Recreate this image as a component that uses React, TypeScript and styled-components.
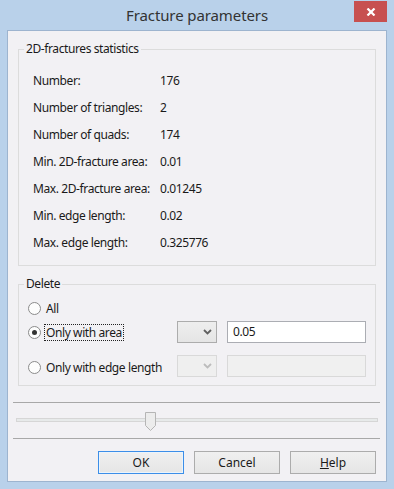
import React from "react";
import styled, { createGlobalStyle, css } from "styled-components";

const GlobalStyle = createGlobalStyle`
  html, body {
    margin: 0;
    padding: 0;
    background: #b9d1ea;
  }
  * {
    box-sizing: border-box;
  }
`;

const Window = styled.div`
  width: 394px;
  height: 489px;
  background: #b9d1ea;
  display: flex;
  flex-direction: column;
  font-family: "Noto Sans", "Open Sans", sans-serif;
  font-size: 12px;
  letter-spacing: -0.4px;
  color: #1a1a1a;
`;

const TitleBar = styled.div`
  height: 30px;
  display: grid;
  grid-template-columns: 1fr auto 1fr;
  align-items: start;
`;

const Title = styled.div`
  grid-column: 2;
  font-size: 15px;
  line-height: 31px;
  color: #333;
  letter-spacing: -0.1px;
`;

const CloseButton = styled.div`
  grid-column: 3;
  justify-self: end;
  margin: 1px 7px 0 0;
  width: 33px;
  height: 21px;
  background: #c75050;
  display: flex;
  align-items: center;
  justify-content: center;
`;

const Client = styled.div`
  margin: 0 7px 7px 7px;
  border: 1px solid #9db4cf;
  background: #f2f1f4;
  padding: 10px 10px 7px 10px;
  display: flex;
  flex-direction: column;
`;

const Group = styled.fieldset<{ $top: number; $bottom: number }>`
  margin: 0;
  border: 1px solid #dcdcdc;
  padding: ${({ $top, $bottom }) => `${$top}px 0 ${$bottom}px 0`};
  min-width: 0;

  & + & {
    margin-top: 10px;
  }
`;

const Legend = styled.legend`
  padding: 0 2px;
  margin-left: 5px;
  line-height: 16px;
  font-size: 12px;
`;

const StatsGrid = styled.div`
  display: grid;
  grid-template-columns: 127px 1fr;
  grid-auto-rows: 27px;
  align-items: center;
  padding: 0 14px;
`;

const DeleteGrid = styled.div`
  display: grid;
  grid-template-columns: 139px 40px 1fr;
  grid-template-rows: 18px 22px 30px;
  row-gap: 4px;
  column-gap: 10px;
  align-items: center;
  padding: 0 9px;

  & > :nth-child(n + 5) {
    align-self: end;
  }
`;

const RadioRow = styled.label<{ $full?: boolean; $lift?: number }>`
  display: flex;
  align-items: center;
  gap: 3px;
  margin-bottom: ${({ $lift }) => $lift ?? 0}px;
  ${({ $full }) =>
    $full &&
    css`
      grid-column: 1 / -1;
    `}
`;

const RadioCircle = styled.span<{ $checked?: boolean }>`
  width: 13px;
  height: 13px;
  border-radius: 50%;
  border: 1px solid #8b8b8b;
  background: #fdfdfd;
  display: flex;
  align-items: center;
  justify-content: center;

  &::after {
    content: "";
    width: 5px;
    height: 5px;
    border-radius: 50%;
    background: ${({ $checked }) => ($checked ? "#333" : "transparent")};
  }
`;

const RadioText = styled.span<{ $focused?: boolean }>`
  line-height: 15px;
  padding: 0 1px;
  border: 1px dotted ${({ $focused }) => ($focused ? "#222" : "transparent")};
`;

const Combo = styled.div<{ $disabled?: boolean }>`
  height: 22px;
  border: 1px solid ${({ $disabled }) => ($disabled ? "#d9d9d9" : "#acacac")};
  background: ${({ $disabled }) =>
    $disabled ? "#efefef" : "linear-gradient(#eeeeee, #e5e5e5)"};
  display: flex;
  align-items: center;
  justify-content: flex-end;
  padding-right: 4px;
`;

const TextBox = styled.div<{ $disabled?: boolean }>`
  height: 22px;
  border: 1px solid ${({ $disabled }) => ($disabled ? "#d9d9d9" : "#abadb3")};
  background: ${({ $disabled }) => ($disabled ? "#f0f0f0" : "#ffffff")};
  padding: 0 5px;
  line-height: 20px;
  color: #1a1a1a;
`;

const Separator = styled.div<{ $top?: number }>`
  height: 1px;
  background: #a8a8a8;
  margin: ${({ $top }) => $top ?? 0}px -4px 0 -5px;
`;

const SliderArea = styled.div`
  height: 35px;
  margin: 0 -2px;
  display: flex;
  align-items: center;
  padding-bottom: 1px;
`;

const Track = styled.div`
  position: relative;
  flex: 1;
  height: 4px;
  border: 1px solid #d6d6d6;
  background: #e7eaea;
`;

const Thumb = styled.svg`
  position: absolute;
  top: -7px;
`;

const ButtonRow = styled.div`
  display: flex;
  justify-content: flex-end;
  gap: 10px;
  margin-top: 12px;
`;

const Button = styled.button<{ $default?: boolean }>`
  width: 86px;
  height: 23px;
  font: inherit;
  color: #1a1a1a;
  border: 1px solid ${({ $default }) => ($default ? "#3c8ee8" : "#acacac")};
  background: linear-gradient(#f0f0f0, #e5e5e5);
  padding: 0;
  ${({ $default }) =>
    $default &&
    css`
      box-shadow: inset 0 0 0 1px #ebf4fc;
    `}
`;

const stats: [string, string][] = [
  ["Number:", "176"],
  ["Number of triangles:", "2"],
  ["Number of quads:", "174"],
  ["Min. 2D-fracture area:", "0.01"],
  ["Max. 2D-fracture area:", "0.01245"],
  ["Min. edge length:", "0.02"],
  ["Max. edge length:", "0.325776"],
];

function Chevron({ disabled }: { disabled?: boolean }) {
  return (
    <svg width="9" height="6" viewBox="0 0 9 6">
      <path
        d="M1 1 L4.5 4.5 L8 1"
        fill="none"
        stroke={disabled ? "#bcbcbc" : "#606060"}
        strokeWidth="1.8"
      />
    </svg>
  );
}

export default function App() {
  const sliderLeft = 128;

  return (
    <>
      <GlobalStyle />
      <Window>
        <TitleBar>
          <Title>Fracture parameters</Title>
          <CloseButton>
            <svg width="10" height="8" viewBox="0 0 10 8">
              <path d="M1.5 0.5 L8.5 7.5 M8.5 0.5 L1.5 7.5" stroke="#fff" strokeWidth="2.2" />
            </svg>
          </CloseButton>
        </TitleBar>
        <Client>
          <Group $top={10} $bottom={9}>
            <Legend>2D-fractures statistics</Legend>
            <StatsGrid>
              {stats.map(([label, value]) => (
                <React.Fragment key={label}>
                  <span>{label}</span>
                  <span>{value}</span>
                </React.Fragment>
              ))}
            </StatsGrid>
          </Group>
          <Group $top={7} $bottom={8}>
            <Legend>Delete</Legend>
            <DeleteGrid>
              <RadioRow $full>
                <RadioCircle />
                <RadioText>All</RadioText>
              </RadioRow>
              <RadioRow>
                <RadioCircle $checked />
                <RadioText $focused>Only with area</RadioText>
              </RadioRow>
              <Combo>
                <Chevron />
              </Combo>
              <TextBox>0.05</TextBox>
              <RadioRow $lift={1}>
                <RadioCircle />
                <RadioText>Only with edge length</RadioText>
              </RadioRow>
              <Combo $disabled>
                <Chevron disabled />
              </Combo>
              <TextBox $disabled />
            </DeleteGrid>
          </Group>
          <Separator $top={16} />
          <SliderArea>
            <Track>
              <Thumb width="11" height="19" viewBox="0 0 11 19" style={{ left: sliderLeft }}>
                <path
                  d="M0.5 0.5 H10.5 V13.5 L5.5 18.5 L0.5 13.5 Z"
                  fill="#ececec"
                  stroke="#b5b5b5"
                />
              </Thumb>
            </Track>
          </SliderArea>
          <Separator />
          <ButtonRow>
            <Button $default>OK</Button>
            <Button>Cancel</Button>
            <Button>
              <u>H</u>elp
            </Button>
          </ButtonRow>
        </Client>
      </Window>
    </>
  );
}
